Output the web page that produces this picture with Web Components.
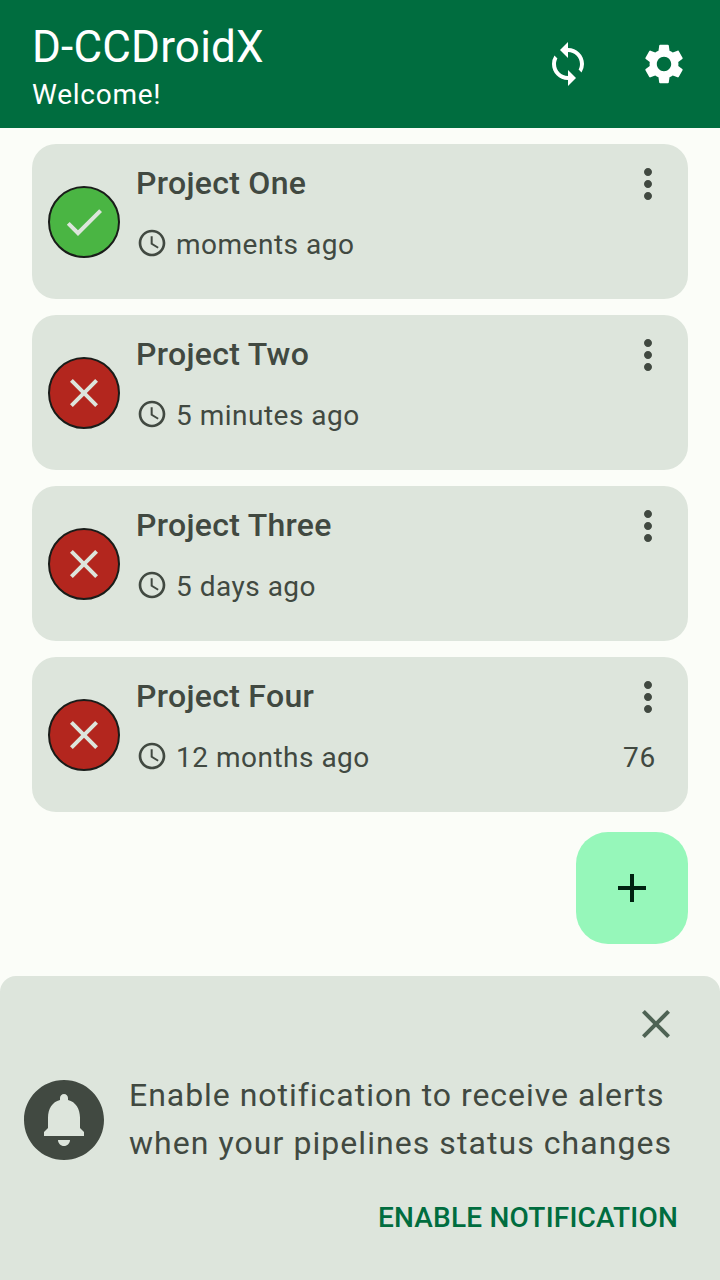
<!DOCTYPE html>
<html lang="en">
<head>
<meta charset="utf-8">
<title>D-CCDroidX</title>
<style>
html, body { margin: 0; height: 100%; }
body { font-family: Roboto, "Liberation Sans", sans-serif; background: #fbfdf8; color: #414941; overflow: hidden; }
</style>
</head>
<body>
<dashboard-app></dashboard-app>
<script>
const ICONS = {
  sync: 'M12 4V1L8 5l4 4V6c3.31 0 6 2.69 6 6 0 1.01-.25 1.97-.7 2.8l1.46 1.46A7.93 7.93 0 0 0 20 12c0-4.42-3.58-8-8-8zm0 14c-3.31 0-6-2.69-6-6 0-1.01.25-1.97.7-2.8L5.24 7.74A7.93 7.93 0 0 0 4 12c0 4.42 3.58 8 8 8v3l4-4-4-4v3z',
  settings: 'M19.14 12.94c.04-.3.06-.61.06-.94 0-.32-.02-.64-.07-.94l2.03-1.58c.18-.14.23-.41.12-.61l-1.92-3.32c-.12-.22-.37-.29-.59-.22l-2.39.96c-.5-.38-1.03-.7-1.62-.94l-.36-2.54c-.04-.24-.24-.41-.48-.41h-3.84c-.24 0-.43.17-.47.41l-.36 2.54c-.59.24-1.13.57-1.62.94l-2.39-.96c-.22-.08-.47 0-.59.22L2.74 8.87c-.12.21-.08.47.12.61l2.03 1.58c-.05.3-.09.63-.09.94s.02.64.07.94l-2.03 1.58c-.18.14-.23.41-.12.61l1.92 3.32c.12.22.37.29.59.22l2.39-.96c.5.38 1.03.7 1.62.94l.36 2.54c.05.24.24.41.48.41h3.84c.24 0 .44-.17.47-.41l.36-2.54c.59-.24 1.13-.56 1.62-.94l2.39.96c.22.08.47 0 .59-.22l1.92-3.32c.12-.22.07-.47-.12-.61l-2.01-1.58zM12 15.6c-1.98 0-3.6-1.62-3.6-3.6s1.62-3.6 3.6-3.6 3.6 1.62 3.6 3.6-1.62 3.6-3.6 3.6z',
  check: 'M9 16.17L4.83 12l-1.42 1.41L9 19 21 7l-1.41-1.41z',
  close: 'M19 6.41L17.59 5 12 10.59 6.41 5 5 6.41 10.59 12 5 17.59 6.41 19 12 13.41 17.59 19 19 17.59 13.41 12z',
  more: 'M12 8c1.1 0 2-.9 2-2s-.9-2-2-2-2 .9-2 2 .9 2 2 2zm0 2c-1.1 0-2 .9-2 2s.9 2 2 2 2-.9 2-2-.9-2-2-2zm0 6c-1.1 0-2 .9-2 2s.9 2 2 2 2-.9 2-2-.9-2-2-2z',
  clock: 'M11.99 2C6.47 2 2 6.48 2 12s4.47 10 9.99 10C17.52 22 22 17.52 22 12S17.52 2 11.99 2zM12 20c-4.42 0-8-3.58-8-8s3.58-8 8-8 8 3.58 8 8-3.58 8-8 8zm.5-13H11v6l5.25 3.15.75-1.23-4.5-2.67z',
  add: 'M19 13h-6v6h-2v-6H5v-2h6V5h2v6h6v2z',
  bell: 'M12 2C6.48 2 2 6.48 2 12s4.48 10 10 10 10-4.48 10-10S17.52 2 12 2zm0 16.5c-.83 0-1.5-.67-1.5-1.5h3c0 .83-.67 1.5-1.5 1.5zm5-2.5H7v-1l1-1v-2.61C8 9.27 9.03 7.47 11 7v-.5c0-.57.43-1 1-1s1 .43 1 1V7c1.97.47 3 2.28 3 4.39V14l1 1v1z'
};
function define(name, render) {
  customElements.define(name, class extends HTMLElement {
    constructor() { super(); this.attachShadow({ mode: 'open' }); }
    connectedCallback() { this.shadowRoot.innerHTML = render(this); }
  });
}

define('md-icon', el => `
<style>:host{display:block;flex:none;width:var(--size,48px);height:var(--size,48px)}svg{display:block;width:100%;height:100%;fill:currentColor}</style>
<svg viewBox="0 0 24 24" aria-hidden="true"><path d="${ICONS[el.getAttribute('name')]}"/></svg>`);

define('app-bar', () => `
<style>
:host{display:flex;align-items:center;box-sizing:border-box;height:128px;padding:0 32px;background:#006d3f;color:#fff}
.titles{flex:1}
.title{font-size:44px;line-height:52px;letter-spacing:.2px;margin-top:7px}
.sub{font-size:28px;line-height:40px;letter-spacing:.75px;margin-top:2px}
.actions{display:flex;gap:48px}
</style>
<div class="titles"><div class="title"><slot name="title"></slot></div><div class="sub"><slot name="subtitle"></slot></div></div>
<div class="actions"><slot name="actions"></slot></div>`);

define('status-badge', el => `
<style>
:host{display:grid;place-items:center;box-sizing:border-box;width:72px;height:72px;border-radius:50%;border:2px solid #191c19;color:#dde5dc;background:${el.getAttribute('status') === 'ok' ? '#4ab543' : '#b3261e'}}
</style>
<md-icon name="${el.getAttribute('status') === 'ok' ? 'check' : 'close'}"></md-icon>`);

define('project-card', el => `
<style>
:host{display:grid;grid-template-columns:72px 1fr 48px;column-gap:16px;box-sizing:border-box;height:155px;padding:0 16px;border-radius:24px;background:#dde5dc}
status-badge{margin-top:42px}
.name{font-size:32px;font-weight:500;line-height:48px;letter-spacing:.3px;margin-top:15px}
.time{display:flex;align-items:center;gap:8px;font-size:28px;line-height:40px;letter-spacing:.5px;margin-top:18px}
.time md-icon{--size:32px;margin-top:-5px}
.side{display:flex;flex-direction:column;align-items:flex-end;margin-top:16px}
.label{font-size:28px;line-height:40px;letter-spacing:.8px;margin:17px 16px 0 0}
</style>
<status-badge status="${el.getAttribute('status')}"></status-badge>
<div><div class="name"><slot></slot></div><div class="time"><md-icon name="clock"></md-icon><span><slot name="time"></slot></span></div></div>
<div class="side"><md-icon name="more"></md-icon><div class="label"><slot name="label"></slot></div></div>`);

define('fab-button', () => `
<style>:host{display:grid;place-items:center;width:112px;height:112px;border-radius:32px;background:#96f7ba;color:#002110}</style>
<md-icon name="add"></md-icon>`);

define('notice-sheet', () => `
<style>
:host{display:flex;flex-direction:column;box-sizing:border-box;height:304px;padding:24px 40px 0 16px;border-radius:16px 16px 0 0;background:#dde5dc}
.close{align-self:flex-end;color:#4e6354}
.body{display:flex;align-items:center;gap:17px;height:96px;margin-top:24px}
.body md-icon{--size:96px}
.text{font-size:32px;line-height:48px;letter-spacing:.97px;white-space:nowrap;margin-top:-2px}
::slotted(.second){letter-spacing:1.06px}
.action{align-self:flex-end;font-size:28px;font-weight:500;line-height:40px;letter-spacing:.2px;color:#006d3f;margin:30px 2px 0 0}
</style>
<md-icon class="close" name="close"></md-icon>
<div class="body"><md-icon name="bell"></md-icon><div class="text"><slot></slot></div></div>
<div class="action"><slot name="action"></slot></div>`);

define('dashboard-app', () => `
<style>
:host{display:flex;flex-direction:column;height:1280px;width:720px;background:#fbfdf8}
main{flex:1;display:flex;flex-direction:column;gap:16px;padding:16px 32px 0}
fab-button{align-self:flex-end;margin-top:4px}
</style>
<app-bar><span slot="title">D-CCDroidX</span><span slot="subtitle">Welcome!</span>
<md-icon slot="actions" name="sync"></md-icon><md-icon slot="actions" name="settings"></md-icon></app-bar>
<main>
<project-card status="ok">Project One<span slot="time">moments ago</span></project-card>
<project-card status="failed">Project Two<span slot="time">5 minutes ago</span></project-card>
<project-card status="failed">Project Three<span slot="time">5 days ago</span></project-card>
<project-card status="failed">Project Four<span slot="time">12 months ago</span><span slot="label">76</span></project-card>
<fab-button></fab-button>
</main>
<notice-sheet>Enable notification to receive alerts<br><span class="second">when your pipelines status changes</span><span slot="action">ENABLE NOTIFICATION</span></notice-sheet>`);
</script>
</body>
</html>
